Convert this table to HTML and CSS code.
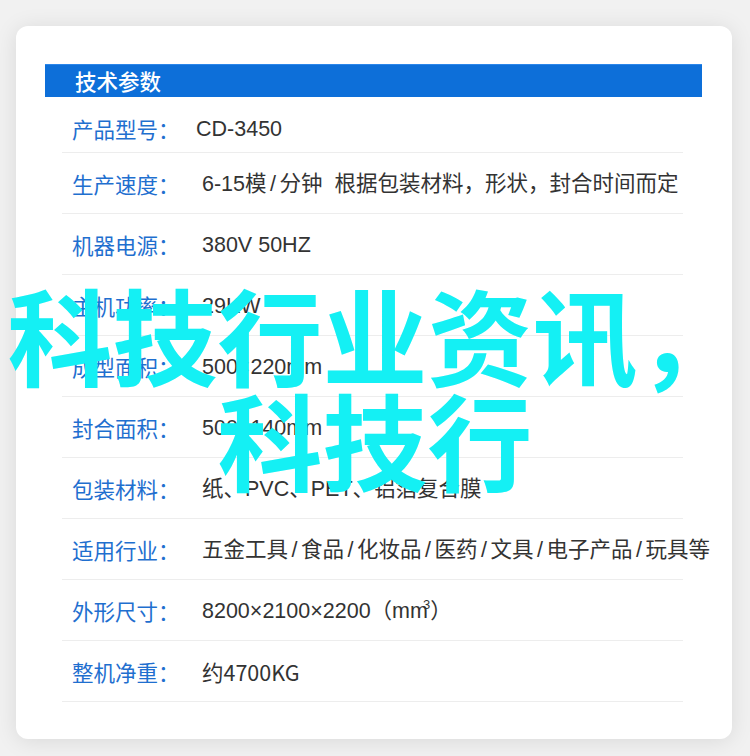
FILE: index.html
```html
<!DOCTYPE html>
<html lang="zh-CN">
<head>
<meta charset="utf-8">
<title>技术参数</title>
<link rel="stylesheet" href="styles.css">
</head>
<body>
<div class="page">
  <div class="card">
    <div class="header">技术参数</div>
    <div class="specs">
      <div class="row"><span class="label">产品型号：</span><span class="value shift">CD-3450</span></div>
      <div class="row"><span class="label">生产速度：</span><span class="value">6-15模<span class="sl">/</span>分钟&nbsp;&nbsp;根据包装材料，形状，封合时间而定</span></div>
      <div class="row"><span class="label">机器电源：</span><span class="value">380V 50HZ</span></div>
      <div class="row"><span class="label">主机功率：</span><span class="value">29KW</span></div>
      <div class="row"><span class="label">成型面积：</span><span class="value">500×220mm</span></div>
      <div class="row"><span class="label">封合面积：</span><span class="value">500×140mm</span></div>
      <div class="row"><span class="label">包装材料：</span><span class="value">纸、PVC、PET、铝箔复合膜</span></div>
      <div class="row"><span class="label">适用行业：</span><span class="value">五金工具<span class="sl">/</span>食品<span class="sl">/</span>化妆品<span class="sl">/</span>医药<span class="sl">/</span>文具<span class="sl">/</span>电子产品<span class="sl">/</span>玩具等</span></div>
      <div class="row"><span class="label">外形尺寸：</span><span class="value">8200×2100×2200（mm<sup class="sup">3</sup>）</span></div>
      <div class="row"><span class="label">整机净重：</span><span class="value cjk">约4700KG</span></div>
    </div>
  </div>
</div>
<div class="watermark">科技行业资讯，科技行</div>
</body>
</html>
```

FILE: styles.css
```css
html, body {
  margin: 0;
  padding: 0;
}
body {
  background: #f1f1f1;
  font-family: "Liberation Sans", "Noto Sans CJK SC", sans-serif;
  width: 750px;
  height: 756px;
  overflow: hidden;
  position: relative;
}
.page {
  padding: 26px 18px 17px 16px;
}
.card {
  background: #ffffff;
  border-radius: 12px;
  box-shadow: 0 2px 22px rgba(0, 0, 0, 0.10);
  padding: 38px 30px 34px 29px;
  height: 713px;
  box-sizing: border-box;
}
.header {
  height: 33px;
  line-height: 32px;
  background: #0d6fd9;
  border-top: 1px solid #2b86ea;
  box-sizing: border-box;
  color: #ffffff;
  font-family: "Noto Sans CJK SC", sans-serif;
  font-size: 21.5px;
  font-weight: 500;
  padding-left: 30px;
}
.specs {
  margin: 0 19px 0 17px;
}
.row {
  display: flex;
  align-items: center;
  padding: 16px 0 14px 10px;
  height: 30px;
  line-height: 30px;
  border-bottom: 1px solid #ededed;
}
.row:first-child {
  padding-top: 17px;
  padding-bottom: 8px;
}
.label {
  width: 130px;
  flex: none;
  color: #1f6fcf;
  font-family: "Noto Sans CJK SC", sans-serif;
  font-size: 21.5px;
}
.value {
  color: #333333;
  font-size: 21.5px;
  white-space: nowrap;
}
.shift {
  margin-left: -6px;
}
.cjk {
  font-family: "Noto Sans CJK SC", sans-serif;
}
.sl {
  padding: 0 3.5px;
}
.sup {
  font-size: 13px;
  vertical-align: 9px;
  line-height: 0;
  margin-left: -5px;
}
.watermark {
  position: absolute;
  left: 0;
  top: 280px;
  width: 750px;
  text-align: center;
  font-family: "Noto Sans CJK SC", sans-serif;
  font-size: 105px;
  line-height: 105px;
  font-weight: 700;
  color: #14f0f4;
}
```
